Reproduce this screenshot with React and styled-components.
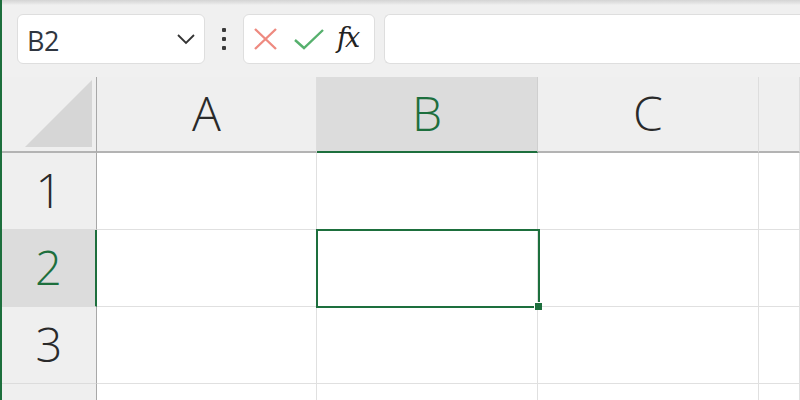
import styled, { createGlobalStyle } from "styled-components";

const GlobalStyle = createGlobalStyle`
  html, body {
    margin: 0;
    padding: 0;
    background: #f0f0f0;
  }
  body {
    font-family: "Open Sans", "Noto Sans", sans-serif;
  }
`;

const Page = styled.div`
  width: 800px;
  height: 400px;
  overflow: hidden;
  background: #f0f0f0;
  border-left: 2px solid #1d6f3d;
  box-sizing: border-box;
  display: flex;
  flex-direction: column;
  & > * {
    flex-shrink: 0;
  }
`;

const TopShade = styled.div`
  height: 5px;
  background: linear-gradient(#d4d4d4, #e6e6e6 70%, #f0f0f0);
`;

const FormulaBar = styled.div`
  display: flex;
  align-items: center;
  padding: 9px 0 13px 15px;
`;

const Box = styled.div`
  height: 50px;
  box-sizing: border-box;
  background: #fff;
  border: 1px solid #dedede;
  border-radius: 6px;
  display: flex;
  align-items: center;
`;

const NameBox = styled(Box)`
  width: 188px;
  padding: 0 8px 0 9px;
  justify-content: space-between;
`;

const NameText = styled.span`
  font-size: 27px;
  color: #2f3640;
  letter-spacing: -0.5px;
  padding-top: 2px;
`;

const Dots = styled.div`
  width: 38px;
  display: flex;
  flex-direction: column;
  align-items: center;
  gap: 5px;
`;

const Dot = styled.span`
  width: 4px;
  height: 4px;
  border-radius: 1px;
  background: #3a3a3a;
`;

const ButtonGroup = styled(Box)`
  width: 132px;
  padding: 0 6px 0 9px;
  gap: 16px;
`;

const Fx = styled.span`
  font-family: "DejaVu Serif", "Liberation Serif", serif;
  font-style: italic;
  font-size: 27px;
  color: #222;
  margin-left: -3px;
  letter-spacing: -2px;
  padding-bottom: 3px;
`;

const FormulaInput = styled(Box)`
  flex: 1;
  margin-left: 9px;
  border-right: none;
  border-radius: 6px 0 0 6px;
`;

const Grid = styled.div`
  display: grid;
  grid-template-columns: 95px 220px 221px 221px 1fr;
  grid-template-rows: 76px 77px 77px 77px 77px;
`;

const Corner = styled.div`
  background: #efefef;
  border-bottom: 2px solid #b3b3b3;
  border-right: 1px solid #a8a8a8;
  display: flex;
  align-items: flex-end;
  justify-content: flex-end;
  padding: 0 4px 4px 0;
`;

const Triangle = styled.div`
  width: 67px;
  height: 67px;
  background: #d6d6d6;
  clip-path: polygon(100% 0, 100% 100%, 0 100%);
`;

const ColHeader = styled.div`
  background: ${(p) => (p.$active ? "#dcdcdc" : "#efefef")};
  border-bottom: 2px solid ${(p) => (p.$active ? "#1d6f3d" : "#b3b3b3")};
  border-right: 1px solid ${(p) => (p.$active ? "#cfcfcf" : "#dddddd")};
  color: ${(p) => (p.$active ? "#1d6f3d" : "#2a2a2a")};
  display: flex;
  align-items: center;
  justify-content: center;
  font-size: 48px;
  font-weight: 300;
  padding-bottom: 4px;
`;

const RowHeader = styled.div`
  background: ${(p) => (p.$active ? "#dcdcdc" : "#efefef")};
  border-right: ${(p) => (p.$active ? "2px solid #1d6f3d" : "1px solid #a8a8a8")};
  border-bottom: 1px solid #dcdcdc;
  color: ${(p) => (p.$active ? "#1d6f3d" : "#2a2a2a")};
  display: flex;
  align-items: center;
  justify-content: center;
  font-size: 47px;
  font-weight: 300;
  padding-bottom: 2px;
`;

const Cell = styled.div`
  position: relative;
  background: #fff;
  border-right: 1px solid #e0e0e0;
  border-bottom: 1px solid #e0e0e0;
`;

const Selection = styled.div`
  position: absolute;
  z-index: 2;
  top: -1px;
  left: -1px;
  right: -3px;
  bottom: -2px;
  border: 2px solid #1d6f3d;
  pointer-events: none;
`;

const FillHandle = styled.div`
  position: absolute;
  right: -4px;
  bottom: -4px;
  width: 7px;
  height: 7px;
  background: #1d6f3d;
  border-left: 1px solid #fff;
  border-top: 1px solid #fff;
`;

const columns = ["A", "B", "C", ""];
const rows = [1, 2, 3, 4];

export default function App() {
  return (
    <Page>
      <GlobalStyle />
      <TopShade />
      <FormulaBar>
        <NameBox>
          <NameText>B2</NameText>
          <svg width="20" height="12" viewBox="0 0 20 12">
            <polyline points="2,2 10,10 18,2" fill="none" stroke="#333" strokeWidth="1.8" />
          </svg>
        </NameBox>
        <Dots>
          <Dot />
          <Dot />
          <Dot />
        </Dots>
        <ButtonGroup>
          <svg width="25" height="24" viewBox="0 0 25 24">
            <path d="M2 2 L23 22 M23 2 L2 22" stroke="#ee8a80" strokeWidth="2.4" fill="none" />
          </svg>
          <svg width="30" height="22" viewBox="0 0 30 22">
            <polyline points="1,12 10,20 29,2" fill="none" stroke="#56b06d" strokeWidth="2.4" />
          </svg>
          <Fx>fx</Fx>
        </ButtonGroup>
        <FormulaInput />
      </FormulaBar>
      <Grid>
        <Corner>
          <Triangle />
        </Corner>
        {columns.map((c) => (
          <ColHeader key={c || "d"} $active={c === "B"}>
            {c}
          </ColHeader>
        ))}
        {rows.map((r) => [
          <RowHeader key={"h" + r} $active={r === 2}>
            {r < 4 ? r : ""}
          </RowHeader>,
          ...columns.map((c) => (
            <Cell key={c + r}>
              {c === "B" && r === 2 && (
                <Selection>
                  <FillHandle />
                </Selection>
              )}
            </Cell>
          )),
        ])}
      </Grid>
    </Page>
  );
}
